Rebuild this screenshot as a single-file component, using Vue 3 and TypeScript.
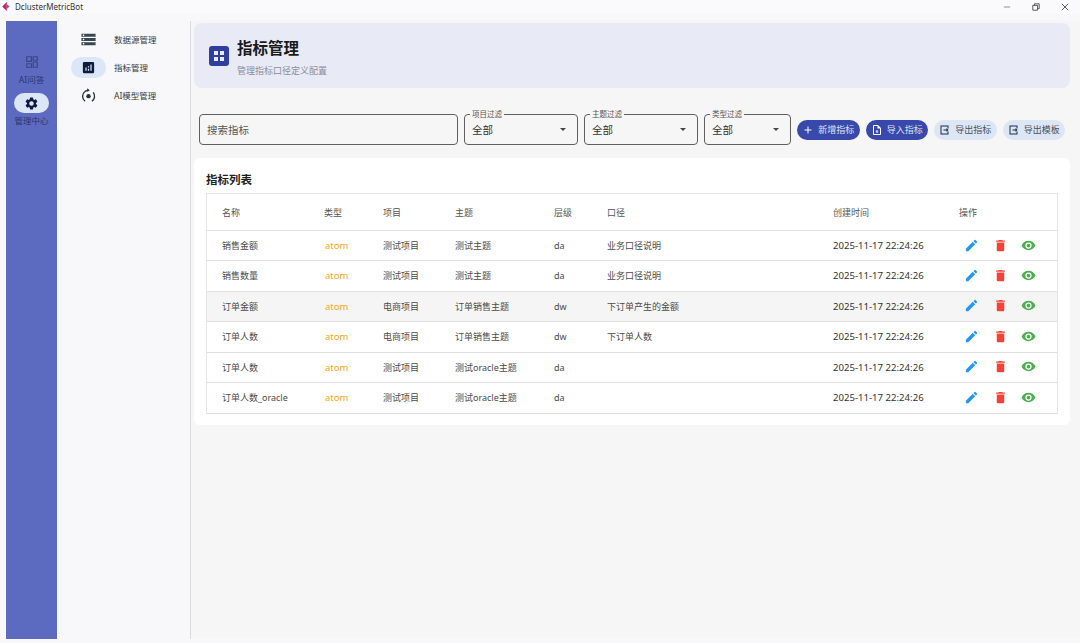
<script setup lang="ts">
interface Row { name: string; project: string; topic: string; level: string; scope: string; hover?: boolean }
const rows: Row[] = [
  { name: '销售金额', project: '测试项目', topic: '测试主题', level: 'da', scope: '业务口径说明' },
  { name: '销售数量', project: '测试项目', topic: '测试主题', level: 'da', scope: '业务口径说明' },
  { name: '订单金额', project: '电商项目', topic: '订单销售主题', level: 'dw', scope: '下订单产生的金额', hover: true },
  { name: '订单人数', project: '电商项目', topic: '订单销售主题', level: 'dw', scope: '下订单人数' },
  { name: '订单人数', project: '测试项目', topic: '测试oracle主题', level: 'da', scope: '' },
  { name: '订单人数_oracle', project: '测试项目', topic: '测试oracle主题', level: 'da', scope: '' },
]
const headers = ['名称', '类型', '项目', '主题', '层级', '口径', '创建时间', '操作']
const filters = [
  { label: '项目过滤', cls: 'wide' },
  { label: '主题过滤', cls: 'wide' },
  { label: '类型过滤', cls: 'narrow' },
]
</script>

<template>
  <div class="window">
    <div class="titlebar">
      <div class="brand">
        <svg class="logo" viewBox="0 0 10 12" width="8" height="9">
          <path d="M6 0 L0 6 L6 12 Z" fill="#d81b60" />
          <path d="M6 3 L10 6 L6 9 Z" fill="#5c6bc0" />
        </svg>
        <span>DclusterMetricBot</span>
      </div>
      <div class="winbtns">
        <svg viewBox="0 0 10 10" width="8" height="8"><path d="M1 5H9" stroke="#777" stroke-width="1" /></svg>
        <svg viewBox="0 0 10 10" width="8" height="8"><path d="M1 3H7V9H1Z M3 3V1H9V7H7" fill="none" stroke="#333" stroke-width="1" /></svg>
        <svg viewBox="0 0 10 10" width="8" height="8"><path d="M1 1L9 9M9 1L1 9" stroke="#333" stroke-width="1" /></svg>
      </div>
    </div>

    <div class="body">
      <aside class="rail">
        <div class="rail-item first">
          <div class="rail-icon">
            <svg viewBox="0 0 24 24" width="14" height="14" fill="none" stroke="#3c4486" stroke-width="2">
              <path d="M3 3h8v8H3zM14 3h7v6h-7zM14 12h7v9h-7zM3 15h8v6H3z" />
            </svg>
          </div>
          <span>AI问答</span>
        </div>
        <div class="rail-item">
          <div class="rail-icon active">
            <svg viewBox="0 0 24 24" width="15" height="15" fill="#0f1b3d">
              <path d="M19.14 12.94c.04-.3.06-.61.06-.94s-.02-.64-.07-.94l2.03-1.58a.5.5 0 0 0 .12-.61l-1.92-3.32a.5.5 0 0 0-.59-.22l-2.39.96a7 7 0 0 0-1.62-.94l-.36-2.54a.5.5 0 0 0-.49-.41h-3.84a.5.5 0 0 0-.48.41l-.36 2.54c-.59.24-1.13.57-1.62.94l-2.39-.96a.5.5 0 0 0-.59.22L2.74 8.87a.5.5 0 0 0 .12.61l2.03 1.58c-.05.3-.09.63-.09.94s.02.64.07.94l-2.03 1.58a.5.5 0 0 0-.12.61l1.92 3.32c.12.22.37.29.59.22l2.39-.96c.5.38 1.03.7 1.62.94l.36 2.54c.05.24.24.41.48.41h3.84c.24 0 .44-.17.47-.41l.36-2.54c.59-.24 1.13-.56 1.62-.94l2.39.96c.22.08.47 0 .59-.22l1.92-3.32a.5.5 0 0 0-.12-.61l-2.01-1.58zM12 15.6a3.6 3.6 0 1 1 0-7.2 3.6 3.6 0 0 1 0 7.2z" />
            </svg>
          </div>
          <span>管理中心</span>
        </div>
      </aside>

      <nav class="subnav">
        <div class="nav-row">
          <div class="nav-icon">
            <svg viewBox="0 0 24 24" width="17" height="17" fill="#37474f"><path d="M2 20h20v-4H2v4zm2-3h2v2H4v-2zM2 4v4h20V4H2zm4 3H4V5h2v2zm-4 7h20v-4H2v4zm2-3h2v2H4v-2z" /></svg>
          </div>
          <span>数据源管理</span>
        </div>
        <div class="nav-row">
          <div class="nav-icon selected">
            <svg viewBox="0 0 24 24" width="15" height="15" fill="#0f1b3d"><path d="M19 3H5a2 2 0 0 0-2 2v14a2 2 0 0 0 2 2h14a2 2 0 0 0 2-2V5a2 2 0 0 0-2-2zM9 17H7v-5h2v5zm4 0h-2v-3h2v3zm0-5h-2v-2h2v2zm4 5h-2V7h2v10z" /></svg>
          </div>
          <span>指标管理</span>
        </div>
        <div class="nav-row">
          <div class="nav-icon">
            <svg viewBox="0 0 24 24" width="15" height="15" fill="none" stroke="#263238" stroke-width="2.200">
              <circle cx="12" cy="13" r="3.500" fill="#263238" stroke="none" />
              <path d="M6.500 21a9.500 9.500 0 0 1 0-15.500L11 3.500M17.500 21a9.500 9.500 0 0 0 2-14" />
              <path d="M10 0.500v6l4-3z" fill="#263238" stroke="none" />
            </svg>
          </div>
          <span>AI模型管理</span>
        </div>
      </nav>

      <main class="main">
        <header class="banner">
          <div class="banner-icon">
            <svg viewBox="0 0 20 20" width="20" height="20">
              <rect width="20" height="20" rx="3" fill="#303f9f" />
              <path d="M5 5h4v4H5zM11 5h4v4h-4zM5 11h4v4H5zM11 11h4v4h-4z" fill="#e8eaf6" />
            </svg>
          </div>
          <div class="banner-text">
            <h1>指标管理</h1>
            <p>管理指标口径定义配置</p>
          </div>
        </header>

        <div class="toolbar">
          <div class="search">搜索指标</div>
          <div v-for="f in filters" :key="f.label" class="select" :class="f.cls">
            <span class="legend">{{ f.label }}</span>
            <span class="value">全部</span>
            <span class="arrow"></span>
          </div>
          <div class="btn primary">
            <svg viewBox="0 0 24 24" width="12" height="12" fill="#fff"><path d="M19 13h-6v6h-2v-6H5v-2h6V5h2v6h6v2z" /></svg>
            <span>新增指标</span>
          </div>
          <div class="btn primary">
            <svg viewBox="0 0 24 24" width="12" height="12" fill="#fff"><path d="M14 2H6a2 2 0 0 0-2 2v16a2 2 0 0 0 2 2h12a2 2 0 0 0 2-2V8l-6-6zm4 18H6V4h7v5h5v11zm-9-5h2v3h2v-3h2l-3-3-3 3z" /></svg>
            <span>导入指标</span>
          </div>
          <div class="btn tonal">
            <svg viewBox="0 0 24 24" width="12" height="12" fill="#1c2b4a"><path d="M3 3h16v6h-2V5H5v14h12v-4h2v6H3V3zm12 5 4 4-4 4v-3H9v-2h6V8z" /></svg>
            <span>导出指标</span>
          </div>
          <div class="btn tonal">
            <svg viewBox="0 0 24 24" width="12" height="12" fill="#1c2b4a"><path d="M3 3h16v6h-2V5H5v14h12v-4h2v6H3V3zm12 5 4 4-4 4v-3H9v-2h6V8z" /></svg>
            <span>导出模板</span>
          </div>
        </div>

        <section class="card">
          <h2>指标列表</h2>
          <div class="table">
            <div class="tr head">
              <div v-for="h in headers" :key="h" class="td">{{ h }}</div>
            </div>
            <div v-for="(r, i) in rows" :key="i" class="tr row" :class="{ hover: r.hover }">
              <div class="td">{{ r.name }}</div>
              <div class="td atom">atom</div>
              <div class="td">{{ r.project }}</div>
              <div class="td">{{ r.topic }}</div>
              <div class="td">{{ r.level }}</div>
              <div class="td">{{ r.scope }}</div>
              <div class="td time">2025-11-17 22:24:26</div>
              <div class="td ops">
                <svg viewBox="0 0 24 24" width="15" height="15" fill="#2196f3"><path d="M3 17.250V21h3.750L17.810 9.940l-3.750-3.750L3 17.250zM20.710 7.040a1 1 0 0 0 0-1.410l-2.340-2.340a1 1 0 0 0-1.410 0l-1.830 1.830 3.750 3.750 1.830-1.830z" /></svg>
                <svg viewBox="0 0 24 24" width="15" height="15" fill="#f44336"><path d="M6 19a2 2 0 0 0 2 2h8a2 2 0 0 0 2-2V7H6v12zM19 4h-3.500l-1-1h-5l-1 1H5v2h14V4z" /></svg>
                <svg viewBox="0 0 24 24" width="15" height="15" fill="#4caf50"><path d="M12 4.500C7 4.500 2.730 7.610 1 12c1.730 4.390 6 7.500 11 7.500s9.270-3.110 11-7.500c-1.730-4.390-6-7.500-11-7.500zM12 17a5 5 0 1 1 0-10 5 5 0 0 1 0 10zm0-8a3 3 0 1 0 0 6 3 3 0 0 0 0-6z" /></svg>
              </div>
            </div>
          </div>
        </section>
      </main>
    </div>
  </div>
</template>

<style>
html, body { margin: 0; padding: 0; background: #f5f5f5; }
</style>

<style scoped>
.window {
  width: 1080px;
  height: 643px;
  display: flex;
  flex-direction: column;
  overflow: hidden;
  background: #f6f6f6;
  font-family: "Noto Sans", "Noto Sans CJK SC", sans-serif;
  color: #3d3d3d;
}
.titlebar {
  height: 14px;
  flex: none;
  background: #fafafc;
  display: flex;
  align-items: center;
  justify-content: space-between;
  font-size: 8px;
  color: #333;
}
.brand { display: flex; align-items: center; gap: 5px; padding-left: 2px; margin-top: -1px; }
.logo { display: block; }
.winbtns { display: flex; gap: 21px; padding-right: 11px; }
.winbtns svg { display: block; }
.body {
  flex: 1;
  display: flex;
  padding: 7px 0 4px 6px;
  min-height: 0;
  background: #f8f8fa;
}
.rail {
  width: 51px;
  flex: none;
  background: #5c6bc0;
  display: flex;
  flex-direction: column;
  align-items: center;
  padding-top: 31px;
  box-sizing: border-box;
  gap: 7px;
}
.rail-item {
  display: flex;
  flex-direction: column;
  align-items: center;
  font-size: 8.500px;
  line-height: 12px;
  color: #2c3470;
  gap: 2px;
}
.rail-icon {
  width: 35px;
  height: 20px;
  border-radius: 10px;
  display: flex;
  align-items: center;
  justify-content: center;
}
.rail-icon.active { background: #dbe6f7; }
.subnav {
  width: 133px;
  flex: none;
  box-sizing: border-box;
  padding: 8px 0 0 14px;
  display: flex;
  flex-direction: column;
  gap: 7px;
}
.nav-row {
  display: flex;
  align-items: center;
  gap: 8px;
  font-size: 8.500px;
  line-height: 12px;
  color: #3a3a3a;
}
.nav-icon {
  width: 35px;
  height: 21px;
  border-radius: 11px;
  display: flex;
  align-items: center;
  justify-content: center;
}
.nav-icon.selected { background: #dbe6f7; }
.main {
  flex: 1;
  min-width: 0;
  border-left: 1px solid #dcdcdc;
  background: #f6f6f6;
  padding: 2px 10px 0 3px;
  display: flex;
  flex-direction: column;
}
.banner {
  height: 65px;
  flex: none;
  background: #e8eaf6;
  border-radius: 8px;
  display: flex;
  align-items: center;
  padding-left: 15px;
  gap: 8px;
}
.banner-icon { display: flex; margin-top: 1px; }
.banner-text { padding-top: 4px; }
.banner-text h1 {
  margin: 0;
  font-size: 15.500px;
  line-height: 22px;
  font-weight: 700;
  color: #1a1a1a;
}
.banner-text p {
  margin: 5px 0 0;
  font-size: 9px;
  line-height: 14px;
  color: #8b8d96;
}
.toolbar {
  display: flex;
  align-items: center;
  margin: 26px -5px 0 5px;
  height: 31px;
  gap: 6px;
  flex: none;
}
.search {
  width: 259px;
  height: 31px;
  box-sizing: border-box;
  border: 1px solid #5f5f5f;
  border-radius: 4px;
  font-size: 10.500px;
  line-height: 30px;
  padding-left: 7px;
  color: #555;
  flex: none;
}
.select {
  position: relative;
  height: 31px;
  box-sizing: border-box;
  border: 1px solid #5f5f5f;
  border-radius: 4px;
  font-size: 10.500px;
  line-height: 30px;
  padding-left: 7px;
  color: #333;
  flex: none;
}
.select.wide { width: 114px; }
.select.narrow { width: 87px; }
.legend {
  position: absolute;
  top: -6px;
  left: 5px;
  padding: 0 2px;
  background: #f6f6f6;
  font-size: 7.500px;
  line-height: 10px;
  color: #555;
}
.arrow {
  position: absolute;
  right: 11px;
  top: 13px;
  width: 0;
  height: 0;
  border-left: 3.500px solid transparent;
  border-right: 3.500px solid transparent;
  border-top: 3.500px solid #444;
}
.btn {
  height: 20px;
  width: 62.500px;
  box-sizing: border-box;
  border-radius: 10px;
  display: flex;
  align-items: center;
  justify-content: center;
  gap: 4px;
  font-size: 9px;
  flex: none;
}
.btn svg { display: block; flex: none; }
.btn.primary { background: #3949ab; color: #dfe3f5; }
.btn.tonal { background: #dde6f5; color: #47505f; }
.card {
  margin-top: 13px;
  height: 267px;
  flex: none;
  box-sizing: border-box;
  background: #fff;
  border-radius: 6px;
  padding: 13px 12px 0;
}
.card h2 {
  margin: 0;
  font-size: 11.500px;
  line-height: 17px;
  font-weight: 700;
  color: #1f1f1f;
}
.table {
  margin-top: 5px;
  border: 1px solid #e6e6e6;
  border-bottom-color: #ddd;
}
.tr {
  display: grid;
  grid-template-columns: 102px 59px 72px 99px 53px 226px 126px 114px;
  align-items: center;
  box-sizing: border-box;
  font-size: 9px;
  color: #4b4b4b;
}
.tr.head { height: 37px; border-bottom: 1.500px solid #e2e2e2; color: #555; }
.tr.row { height: 30.400px; border-bottom: 1px solid #dfdfdf; }
.tr.row:last-child { border-bottom: none; }
.tr.row .td { padding-bottom: 0.500px; }
.tr.hover { background: #f5f5f5; }
.td { padding-left: 15px; white-space: nowrap; }
.atom { color: #f5a623; font-size: 9.500px; padding-left: 16px; }
.time { font-size: 9.600px; color: #333; }
.tr.row .ops { display: flex; gap: 13.500px; padding: 0 0 1px 20px; align-items: center; }
.ops svg { display: block; flex: none; }
</style>
